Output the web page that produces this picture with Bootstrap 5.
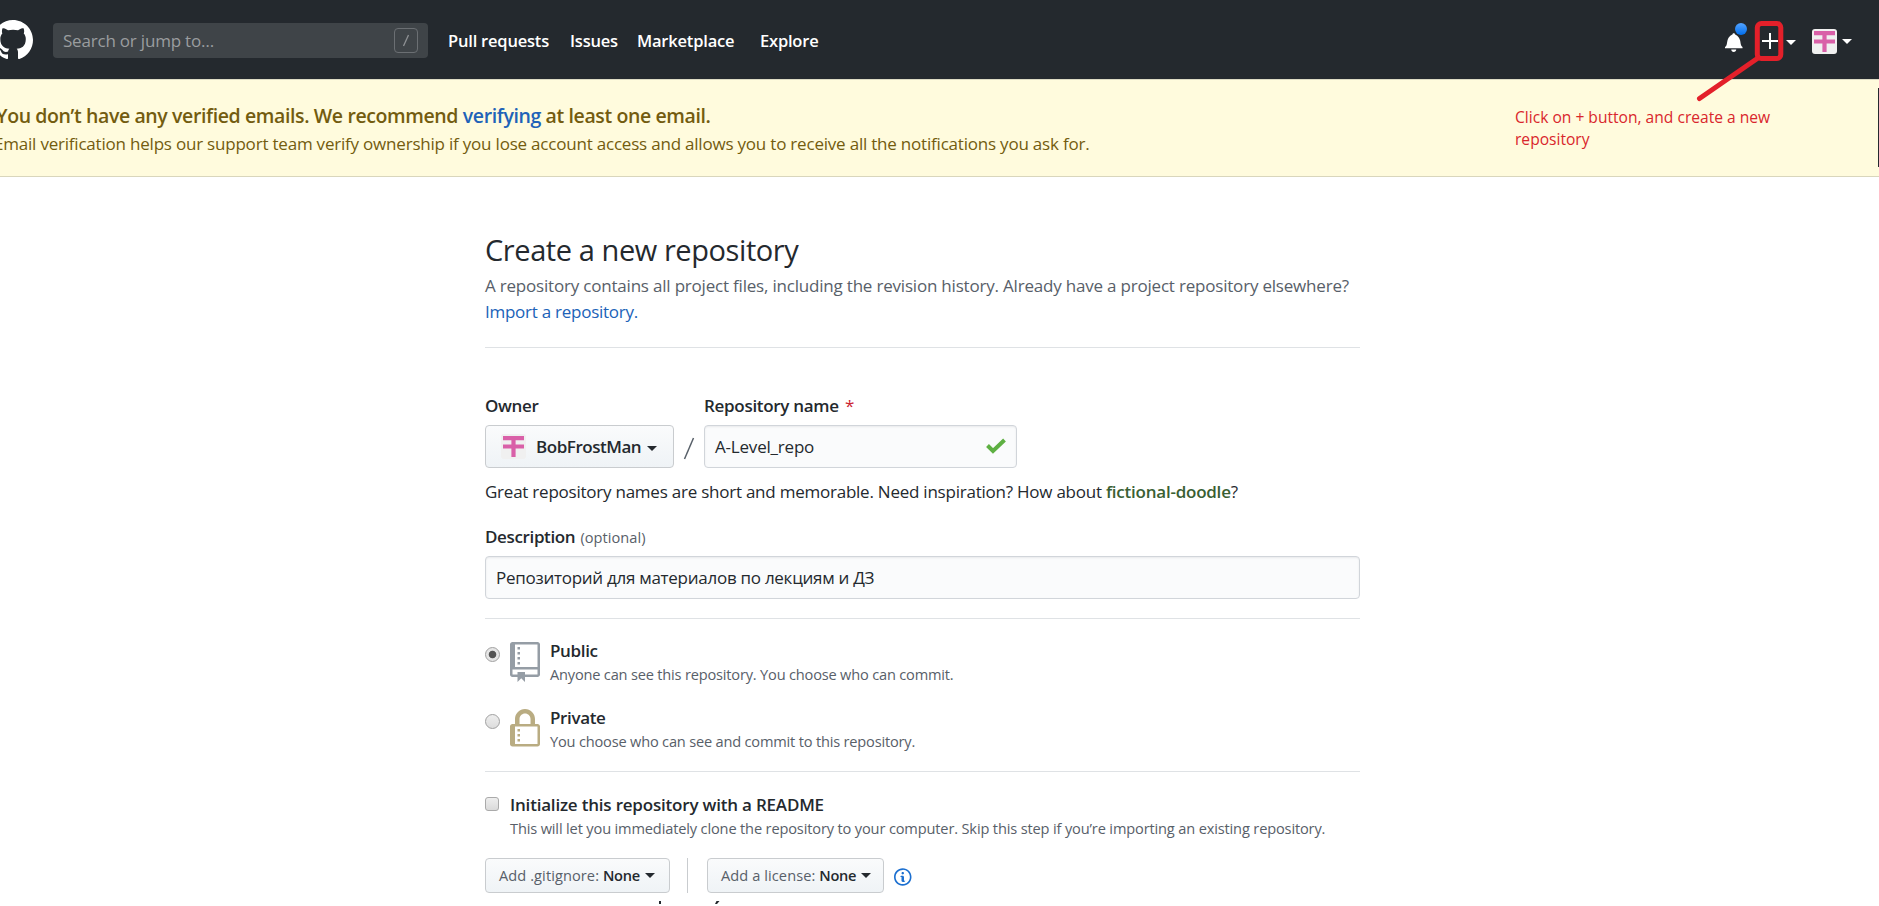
<!DOCTYPE html>
<html lang="en">
<head>
<meta charset="utf-8">
<meta name="viewport" content="width=device-width, initial-scale=1">
<title>Create a new repository</title>
<link href="https://cdn.jsdelivr.net/npm/bootstrap@5.3.0/dist/css/bootstrap.min.css" rel="stylesheet">
<style>
body{font-family:"Open Sans",sans-serif;font-size:17px;letter-spacing:-.2px;line-height:26px;color:#24292e;height:906px;overflow:hidden;position:relative;white-space:nowrap}
a{color:#2062b8;text-decoration:none}
svg{display:block;flex:none}
.semi{font-weight:600}
.topbar{background:#24292e;height:79px;padding:0 27px 0 0;overflow:hidden}
.brand{margin-left:-7px}
.search{width:375px;height:35px;margin-left:20px;margin-top:2px;padding:1px 10px 0;background:#3f4448;border-radius:4px;color:#9a9d9f;letter-spacing:-.2px}
.slash-key{width:24px;height:25px;border:1px solid #6b6f73;border-radius:4px;margin-top:-1px}
.topnav{margin-left:20px;font-size:16.5px;letter-spacing:-.2px;margin-top:2px}
.topnav a{color:#fff}
.caret{width:0;height:0;border:5px solid transparent;border-top-color:currentColor;border-bottom:0;flex:none}
.bell{width:18px;margin-top:4px}
.bell i{position:absolute;left:10px;top:-9px;width:12px;height:12px;border-radius:50%;background:linear-gradient(#54a3ff,#006eed)}
.notice{height:98px;background:#fffbdd;border-top:1px solid #dddbc4;border-bottom:1px solid #d9d6bc;color:#735c0f;padding-top:22px;overflow:hidden}
.notice-title{font-size:19.5px;line-height:28px;letter-spacing:-.39px;margin-left:-4px}
.notice-text{margin:1px 0 0 -6px;letter-spacing:-.207px}
.hint{left:1515px;top:106px;width:290px;font-size:15.6px;line-height:22px;letter-spacing:0;color:#d9262c;white-space:normal}
.arrow{left:1690px;top:15px}
.edge{left:1878px;top:88px;width:1px;height:79px;background:#24292e}
.page{width:875px;margin-left:485px;padding-top:50px}
h1{font-size:29px;font-weight:400;line-height:45px;letter-spacing:-.42px;margin:0}
.lede{color:#586069;margin-top:1px}
.rule{height:1px;background:#dfe2e5}
.lbl{font-weight:600;letter-spacing:-.36px}
.soft-btn{background:linear-gradient(#fafbfc,#eff3f6);border:1px solid #c9cccf;border-radius:4px;color:#24292e}
.owner{width:189px;height:43px;padding-left:15px;letter-spacing:-.46px;font-weight:600}
.field{height:43px;border:1px solid #d1d5da;border-radius:4px;background:#fafbfc;box-shadow:inset 0 1px 2px rgba(27,31,35,.08);padding:1px 10px 0}
.opt{line-height:24px;padding-top:1px;margin-bottom:-1px}
.note{font-size:14.6px;line-height:24px;color:#586069;letter-spacing:-.19px}
.dot{width:15px;height:15px;border-radius:50%;border:1px solid #a0a0a0;background:linear-gradient(#eee,#ddd)}
.dot.on{background:radial-gradient(circle,#555 0 3.4px,#e6e6e6 4.2px)}
.box{width:14px;height:14px;border-radius:3px;border:1px solid #aaa;background:linear-gradient(#eee,#dadada);margin-top:5px}
.sm{height:35px;font-size:14.6px;padding-left:13px;letter-spacing:.08px;color:#586069}
.sm b{font-weight:600;color:#24292e;letter-spacing:-.25px}
</style>
</head>
<body>
<svg width="0" height="0" class="position-absolute"><defs>
<symbol id="ident" viewBox="0 0 25 25"><rect width="25" height="25" rx="3" fill="#f0f0f0"/><path fill="#d960a8" d="M2 2h21v4.2h-8.4v4.2H23v4.2h-8.4V23h-4.2v-8.4H2v-4.2h8.400V6.200H2z"/></symbol>
</defs></svg>

<header class="topbar d-flex align-items-center">
  <a class="brand" href="#"><svg width="40" height="40" viewBox="0 0 16 16" fill="#fff"><path fill-rule="evenodd" d="M8 0C3.58 0 0 3.58 0 8c0 3.54 2.29 6.530 5.470 7.590.4.070.55-.17.55-.38 0-.19-.01-.82-.01-1.490-2.010.37-2.530-.49-2.690-.94-.09-.23-.48-.94-.82-1.130-.28-.15-.68-.52-.01-.53.63-.01 1.080.58 1.230.82.72 1.210 1.870.87 2.330.66.070-.52.28-.87.51-1.070-1.780-.2-3.640-.89-3.640-3.950 0-.87.31-1.590.82-2.150-.08-.2-.36-1.020.08-2.120 0 0 .67-.21 2.200.82.64-.18 1.320-.27 2-.27s1.360.09 2 .27c1.530-1.040 2.200-.82 2.200-.82.44 1.100.16 1.920.08 2.120.51.56.82 1.270.82 2.150 0 3.070-1.870 3.750-3.650 3.950.29.25.54.73.54 1.480 0 1.070-.01 1.930-.01 2.200 0 .21.15.46.55.38A8.013 8.013 0 0 0 16 8c0-4.420-3.580-8-8-8z"/></svg></a>
  <div class="search d-flex align-items-center justify-content-between"><span>Search or jump to…</span>
    <span class="slash-key d-flex align-items-center justify-content-center"><svg width="8" height="13"><path d="M6.500 1 1.500 12" stroke="#8f9295" stroke-width="1.300"/></svg></span></div>
  <nav class="topnav semi d-flex">
    <a href="#" style="width:122px">Pull requests</a><a href="#" style="width:67px">Issues</a><a href="#" style="width:123px">Marketplace</a><a href="#">Explore</a>
  </nav>
  <div class="ms-auto d-flex align-items-center text-white">
    <div class="bell position-relative"><svg width="17.500" height="20" viewBox="0 0 14 16" fill="#fff"><path d="M14 12v1H0v-1l.73-.58c.77-.77.81-2.550 1.190-4.420C2.690 3.230 6 2 6 2c0-.55.45-1 1-1s1 .45 1 1c0 0 3.390 1.230 4.160 5 .38 1.880.42 3.660 1.190 4.420l.66.58H14zm-7 4c1.110 0 2-.89 2-2H5c0 1.110.89 2 2 2z"/></svg><i></i></div>
    <svg width="16" height="16" class="me-2" style="margin-left:19px;margin-top:3px"><path d="M8 0v16M0 8h16" stroke="#fff" stroke-width="2"/></svg>
    <span class="caret" style="margin-top:5px"></span>
    <svg width="25" height="25" style="margin-left:16px;margin-top:4px"><use href="#ident"/></svg>
    <span class="caret mt-1" style="margin-left:5px"></span>
  </div>
</header>

<section class="notice">
  <div class="notice-title semi">You don’t have any verified emails. We recommend <a href="#">verifying</a> at least one email.</div>
  <div class="notice-text">Email verification helps our support team verify ownership if you lose account access and allows you to receive all the notifications you ask for.</div>
</section>

<main class="page">
  <h1>Create a new repository</h1>
  <div class="lede">A repository contains all project files, including the revision history. Already have a project repository elsewhere?<br><a href="#" style="letter-spacing:-.26px">Import a repository.</a></div>
  <div class="rule" style="margin:22px 0 45px"></div>

  <div class="d-flex">
    <div>
      <div class="lbl">Owner</div>
      <div class="owner soft-btn d-flex align-items-center" style="margin-top:6px"><svg width="25" height="25" style="margin-top:-1px"><use href="#ident"/></svg><span style="margin:1px 0 0 10px">BobFrostMan</span><span class="caret" style="margin-left:6px;margin-top:4px"></span></div>
    </div>
    <svg width="12" height="24" style="margin:44px 9px 0"><path d="M10.500 1 1.500 22" stroke="#586069" stroke-width="1.500"/></svg>
    <div>
      <div class="lbl" style="letter-spacing:-.3px">Repository name <span class="fw-normal" style="color:#cb2431;margin-left:2px">*</span></div>
      <div class="field d-flex align-items-center justify-content-between" style="width:313px;margin-top:6px"><span>A-Level_repo</span><svg width="20" height="16" style="margin-top:-2px"><path d="M1.500 7.500 7 13 18.500 2" fill="none" stroke="#5eb043" stroke-width="4"/></svg></div>
    </div>
  </div>
  <div style="margin-top:11px;letter-spacing:-.235px">Great repository names are short and memorable. Need inspiration? How about <b class="semi" style="color:#3a5f33">fictional-doodle</b>?</div>
  <div class="lbl" style="margin-top:19px">Description <span class="note" style="font-weight:500;letter-spacing:.05px;margin-left:1px">(optional)</span></div>
  <div class="field d-flex align-items-center" style="margin-top:6px;letter-spacing:-.27px">Репозиторий для материалов по лекциям и ДЗ</div>
  <div class="rule" style="margin:19px 0"></div>

  <div class="d-flex">
    <span class="dot on" style="margin-top:9px"></span>
    <svg width="30" height="40" viewBox="0 0 12 16" fill="#959da5" style="margin:4px 10px 0"><path fill-rule="evenodd" d="M4 9H3V8h1v1zm0-3H3v1h1V6zm0-2H3v1h1V4zm0-2H3v1h1V2zm8-1v12c0 .55-.45 1-1 1H6v2l-1.500-1.500L3 16v-2H1c-.55 0-1-.45-1-1V1c0-.55.45-1 1-1h10c.55 0 1 .45 1 1zm-1 10H1v2h2v-1h3v1h5v-2zm0-10H2v9h9V1z"/></svg>
    <div><div class="opt lbl">Public</div><div class="note">Anyone can see this repository. You choose who can commit.</div></div>
  </div>
  <div class="d-flex" style="margin-top:19px">
    <span class="dot" style="margin-top:9px"></span>
    <svg width="30" height="40" viewBox="0 0 12 16" fill="#b9ac82" style="margin:4px 10px 0"><path fill-rule="evenodd" d="M4 13H3v-1h1v1zm8-6v7c0 .55-.45 1-1 1H1c-.55 0-1-.45-1-1V7c0-.55.45-1 1-1h1V4c0-2.200 1.800-4 4-4s4 1.800 4 4v2h1c.55 0 1 .45 1 1zM3.800 6h4.410V4c0-1.220-.98-2.200-2.200-2.200-1.220 0-2.200.98-2.200 2.200v2H3.800zM11 7H2v7h9V7zM4 8H3v1h1V8zm0 2H3v1h1v-1z"/></svg>
    <div><div class="opt lbl">Private</div><div class="note">You choose who can see and commit to this repository.</div></div>
  </div>
  <div class="rule" style="margin:18px 0 20px"></div>

  <div class="d-flex">
    <span class="box" style="margin-right:11px"></span>
    <div><div class="opt semi">Initialize this repository with a README</div><div class="note" style="letter-spacing:-.15px">This will let you immediately clone the repository to your computer. Skip this step if you’re importing an existing repository.</div></div>
  </div>

  <div class="d-flex" style="margin-top:18px">
    <div class="soft-btn sm d-flex align-items-center" style="width:185px"><span style="margin-top:-1px">Add .gitignore: <b>None</b></span><span class="caret" style="margin-left:5px;color:#24292e"></span></div>
    <div style="width:1px;height:35px;background:#c9cccf;margin:0 19px 0 17px"></div>
    <div class="soft-btn sm d-flex align-items-center" style="width:177px"><span style="margin-top:-1px">Add a license: <b>None</b></span><span class="caret" style="margin-left:5px;color:#24292e"></span></div>
    <svg width="17.500" height="20" viewBox="0 0 14 16" fill="#1b6fd0" style="margin:9px 0 0 10px"><path fill-rule="evenodd" d="M6.300 5.690a.942.942 0 0 1-.28-.7c0-.28.09-.52.28-.7.19-.18.42-.28.7-.28.28 0 .52.09.7.28.18.19.28.42.28.7 0 .28-.09.52-.28.7a1 1 0 0 1-.7.3c-.28 0-.52-.11-.7-.3zM8 7.990c-.02-.25-.11-.48-.31-.69-.2-.19-.42-.3-.69-.31H6c-.27.02-.48.13-.69.31-.2.2-.3.44-.31.69h1v3c.02.27.11.5.31.69.2.2.42.31.69.31h1c.27 0 .48-.11.69-.31.2-.19.3-.42.31-.69H8V7.980v.01zM7 2.300c-3.140 0-5.700 2.540-5.700 5.680 0 3.140 2.560 5.700 5.700 5.700s5.700-2.550 5.700-5.700c0-3.150-2.560-5.690-5.700-5.690v.01zM7 .98c3.860 0 7 3.140 7 7s-3.140 7-7 7-7-3.120-7-7 3.140-7 7-7z"/></svg>
  </div>
  <!-- tops of the next line, cut off by the window edge -->
  <svg width="260" height="3" style="margin-top:8px"><path d="M174 0h2v3h-2zM231.500 0h3l-2.500 3h-2z" fill="#24292e"/></svg>
</main>

<!-- annotation over the page -->
<div class="hint position-absolute">Click on + button, and create a new repository</div>
<svg class="arrow position-absolute" width="110" height="100" fill="none" stroke="#e3202a" stroke-linecap="round"><rect x="67.300" y="8.500" width="23.500" height="35" rx="4" stroke-width="5"/><path d="M9.500 83.500 68 43" stroke-width="5"/></svg>
<div class="edge position-absolute"></div>
<script src="https://cdn.jsdelivr.net/npm/bootstrap@5.3.0/dist/js/bootstrap.bundle.min.js"></script>
</body>
</html>
